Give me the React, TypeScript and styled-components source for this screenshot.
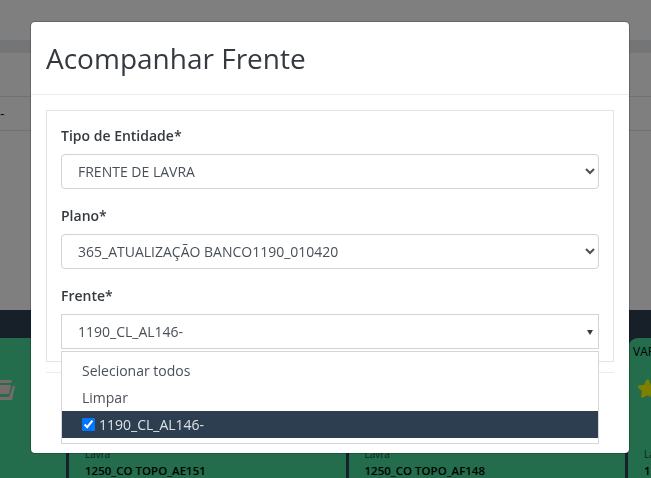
import styled, { createGlobalStyle } from 'styled-components';
import { FaStar } from 'react-icons/fa';

const GlobalStyle = createGlobalStyle`
  html, body {
    margin: 0;
    padding: 0;
    height: 100%;
    overflow: hidden;
    background: #fff;
    font-family: 'Open Sans', sans-serif;
  }
`;

const Page = styled.div`
  width: 651px;
  height: 478px;
  display: flex;
  flex-direction: column;
  overflow: hidden;
`;

const TopSpace = styled.div`
  flex: 0 0 40px;
`;

const Strip = styled.div`
  flex: 0 0 13px;
  background: #e9ebee;
`;

const TableHead = styled.div`
  flex: 0 0 44px;
  box-sizing: border-box;
  border-bottom: 1px solid #dee2e6;
`;

const TableRow = styled.div`
  flex: 0 0 34px;
  box-sizing: border-box;
  line-height: 33px;
  font-size: 14px;
  color: #212529;
  border-bottom: 1px solid #dee2e6;
`;

const Spacer = styled.div`
  flex: 0 0 179px;
`;

const Board = styled.div`
  flex: 1;
  background: #2f3e50;
  display: flex;
  gap: 3px;
  padding-top: 28px;
  margin-left: -210.5px;
`;

const Card = styled.div`
  flex: 0 0 276.5px;
  height: 160px;
  background: #47d998;
  border-radius: 10px 10px 0 0;
  box-sizing: border-box;
  padding: 3px 0 0 5px;
  display: flex;
  flex-direction: column;
  color: #000;
`;

const CardTitle = styled.div`
  font-size: 12px;
  line-height: 21px;
  white-space: nowrap;
  height: 21px;
`;

const CardIcon = styled.div<{ $indent: number }>`
  height: 21px;
  margin: 16px 0 0 ${(p) => p.$indent}px;
  line-height: 0;
`;

const CardInfo = styled.div`
  margin: 48px 0 0 11px;
  white-space: nowrap;
`;

const CardKind = styled.div`
  font-size: 10px;
  line-height: 15px;
  color: #12503a;
`;

const CardName = styled.div`
  font-size: 11.5px;
  font-weight: 600;
  line-height: 18px;
`;

const Overlay = styled.div`
  position: fixed;
  inset: 0;
  background: rgba(0, 0, 0, 0.5);
  padding: 21px 0 0 30px;
`;

const Modal = styled.div`
  width: 600px;
  height: 433px;
  background: #fff;
  background-clip: padding-box;
  border: 1px solid rgba(0, 0, 0, 0.2);
  border-radius: 5px;
  box-sizing: border-box;
`;

const Header = styled.div`
  height: 73px;
  padding: 0 15px 1px;
  border-bottom: 1px solid #e9ecef;
  box-sizing: border-box;
  display: flex;
  align-items: center;
`;

const Title = styled.h1`
  margin: 0;
  font-size: 28px;
  font-weight: 400;
  color: #343a40;
`;

const Body = styled.div`
  padding: 15px 15px 10px;
`;

const Panel = styled.div`
  border: 1px solid #e3e3e3;
  height: 252px;
  box-sizing: border-box;
  padding: 14px 14px 0;
  display: flex;
  flex-direction: column;
`;

const Label = styled.label`
  flex: none;
  font-size: 14px;
  font-weight: 600;
  color: #343a40;
  line-height: 21px;
  margin-bottom: 8px;
`;

const NativeSelect = styled.select`
  flex: none;
  height: 35px;
  width: 100%;
  border: 1px solid #ced4da;
  border-radius: 4px;
  background: #fff;
  box-sizing: border-box;
  padding: 0 12px;
  font-family: 'Open Sans', sans-serif;
  font-size: 14px;
  color: #495057;
  margin-bottom: 16px;
`;

const MultiSelect = styled.div`
  flex: none;
  position: relative;
`;

const MultiButton = styled.div`
  height: 35px;
  border: 1px solid #ced4da;
  box-sizing: border-box;
  padding: 0 5px 0 16px;
  display: flex;
  align-items: center;
  justify-content: space-between;
  font-size: 14px;
  color: #495057;
`;

const Caret = styled.span`
  width: 0;
  height: 0;
  margin-top: 2px;
  border-left: 3px solid transparent;
  border-right: 3px solid transparent;
  border-top: 5px solid #343a40;
`;

const Dropdown = styled.div`
  position: absolute;
  top: 37px;
  left: 0;
  right: 0;
  background: #fff;
  border: 1px solid #d6d6d6;
  box-sizing: border-box;
  padding: 5px 0;
  z-index: 2;
`;

const Option = styled.label<{ $selected?: boolean }>`
  height: 27px;
  padding-left: 20px;
  display: flex;
  align-items: center;
  font-size: 14px;
  color: ${(p) => (p.$selected ? '#dee2e6' : '#495057')};
  background: ${(p) => (p.$selected ? '#2c3e50' : 'transparent')};
`;

const Check = styled.input`
  width: 13px;
  height: 13px;
  margin: 0 4px 0 0;
`;

const Footer = styled.div`
  margin: 0 15px;
  border-top: 1px solid #e9ecef;
`;

const BoxIcon = () => (
  <svg width="30" height="24" viewBox="0 0 30 24" fill="#eed4d4">
    <path d="M5 2h21l-1 3H4z" />
    <path d="M3 7h22l-2 9H1z" />
    <path d="M27 8h2l-3 14H0v-3h23z" />
  </svg>
);

const cards = [
  { title: '', name: '', icon: <BoxIcon />, indent: 191 },
  { title: '', name: '1250_CO TOPO_AE151', icon: null, indent: 0 },
  { title: '', name: '1250_CO TOPO_AF148', icon: null, indent: 0 },
  { title: 'VARIANTE', name: '1250_CO TOPO_AF150', icon: <FaStar size={21} color="#ffff00" />, indent: 4 },
];

const App = () => (
  <>
    <GlobalStyle />
    <Page>
      <TopSpace />
      <Strip />
      <TableHead />
      <TableRow>-</TableRow>
      <Spacer />
      <Board>
        {cards.map((card, i) => (
          <Card key={i}>
            <CardTitle>{card.title}</CardTitle>
            <CardIcon $indent={card.indent}>{card.icon}</CardIcon>
            {card.name && (
              <CardInfo>
                <CardKind>Lavra</CardKind>
                <CardName>{card.name}</CardName>
              </CardInfo>
            )}
          </Card>
        ))}
      </Board>
    </Page>
    <Overlay>
      <Modal>
        <Header>
          <Title>Acompanhar Frente</Title>
        </Header>
        <Body>
          <Panel>
            <Label>Tipo de Entidade*</Label>
            <NativeSelect defaultValue="FRENTE DE LAVRA">
              <option>FRENTE DE LAVRA</option>
            </NativeSelect>
            <Label>Plano*</Label>
            <NativeSelect defaultValue="365_ATUALIZAÇÃO BANCO1190_010420">
              <option>365_ATUALIZAÇÃO BANCO1190_010420</option>
            </NativeSelect>
            <Label>Frente*</Label>
            <MultiSelect>
              <MultiButton>
                1190_CL_AL146-
                <Caret />
              </MultiButton>
              <Dropdown>
                <Option>Selecionar todos</Option>
                <Option>Limpar</Option>
                <Option $selected>
                  <Check type="checkbox" defaultChecked />
                  1190_CL_AL146-
                </Option>
              </Dropdown>
            </MultiSelect>
          </Panel>
        </Body>
        <Footer />
      </Modal>
    </Overlay>
  </>
);

export default App;
